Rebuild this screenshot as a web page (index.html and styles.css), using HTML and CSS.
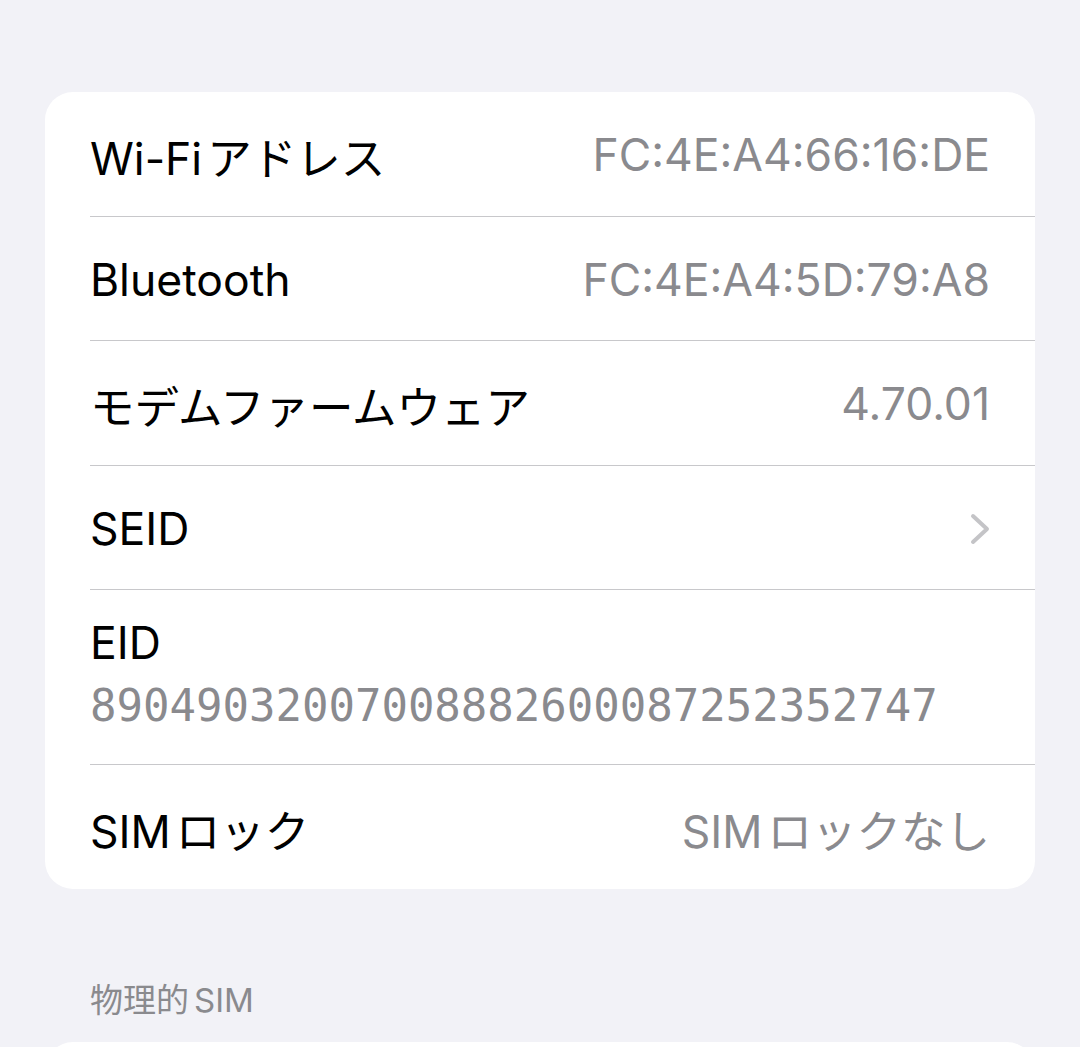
FILE: index.html
```html
<!DOCTYPE html>
<html lang="ja">
<head>
    <meta charset="UTF-8">
    <meta name="viewport" content="width=device-width, initial-scale=1.0">
    <title>情報</title>
    <link rel="stylesheet" href="styles.css">
</head>
<body>
    <div class="page">
        <div class="card">
            <div class="row">
                <span class="label"><span class="latin">Wi-Fi</span>アドレス</span>
                <span class="value">FC:4E:A4:66:16:DE</span>
            </div>
            <div class="row">
                <span class="label">Bluetooth</span>
                <span class="value">FC:4E:A4:5D:79:A8</span>
            </div>
            <div class="row">
                <span class="label">モデムファームウェア</span>
                <span class="value">4.70.01</span>
            </div>
            <div class="row">
                <span class="label">SEID</span>
                <svg class="chevron" width="22" height="34" viewBox="0 0 22 34">
                    <path d="M4 4 L18 17 L4 30" fill="none" stroke="#c4c4c7" stroke-width="4" stroke-linecap="round" stroke-linejoin="round"/>
                </svg>
            </div>
            <div class="row row-tall">
                <span class="label">EID</span>
                <span class="eid">89049032007008882600087252352747</span>
            </div>
            <div class="row">
                <span class="label"><span class="latin">SIM</span>ロック</span>
                <span class="value"><span class="latin">SIM</span>ロックなし</span>
            </div>
        </div>

        <div class="section-title"><span class="latin">物理的</span>SIM</div>
        <div class="card card-next"></div>
    </div>
</body>
</html>
```

FILE: styles.css
```css
body {
    margin: 0;
    background-color: #f2f2f7;
    font-family: Inter, "Noto Sans CJK JP", sans-serif;
    overflow: hidden;
}

.page {
    padding: 92px 45px 0;
}

.card {
    background-color: #fff;
    border-radius: 28px;
}

.row {
    display: flex;
    justify-content: space-between;
    align-items: center;
    height: 124.6px;
    margin-left: 45px;
    padding-right: 45px;
    padding-top: 3px;
    box-sizing: border-box;
    border-bottom: 1.5px solid #c8c8cb;
}

.row:last-child {
    border-bottom: none;
    height: 124px;
}

.label {
    font-size: 44.5px;
    color: #000;
}

.value {
    font-size: 44.5px;
    color: #8a8a8e;
}

.latin {
    margin-right: 5px;
}

.chevron {
    margin-right: -1px;
}

.row-tall {
    height: 175px;
    flex-direction: column;
    align-items: flex-start;
    justify-content: flex-start;
    padding-top: 26px;
    gap: 10px;
}

.eid {
    font-family: "DejaVu Sans Mono", monospace;
    font-size: 44px;
    color: #8a8a8e;
}

.section-title {
    margin: 85px 0 0 45px;
    font-size: 33px;
    color: #8a8a8e;
}

.card-next {
    margin-top: 20px;
    height: 100px;
}
```
